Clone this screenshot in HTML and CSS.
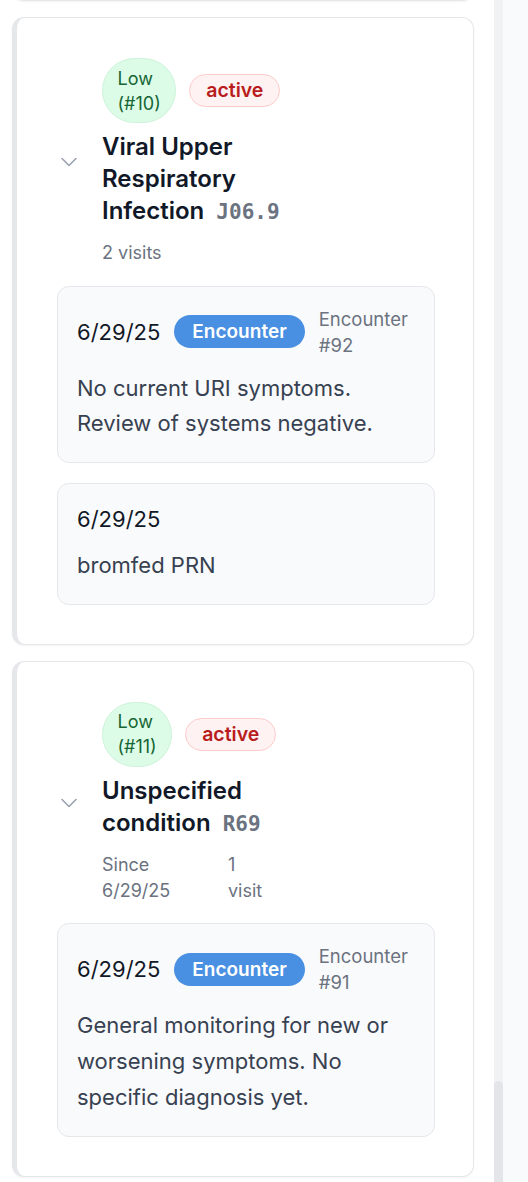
FILE: index.html
```html
<!DOCTYPE html>
<html lang="en">
<head>
<meta charset="utf-8">
<title>Problems</title>
<link rel="stylesheet" href="styles.css">
</head>
<body>
<div class="page">
  <div class="main">
    <div class="card card-stub"></div>

    <div class="card">
      <div class="card-head">
        <span class="chev"><svg viewBox="0 0 24 24" width="28" height="28"><path d="M6 9l6 6 6-6"/></svg></span>
        <div class="head-body">
          <div class="badges">
            <span class="prio">Low (#10)</span>
            <span class="status">active</span>
          </div>
          <h3 class="title">Viral Upper Respiratory Infection <code class="code">J06.9</code></h3>
          <div class="meta"><span class="meta-item">2 visits</span></div>
        </div>
      </div>
      <div class="entries">
        <div class="entry">
          <div class="entry-head">
            <span class="date">6/29/25</span>
            <span class="pill">Encounter</span>
            <span class="ref">Encounter #92</span>
          </div>
          <p class="note">No current URI symptoms. Review of systems negative.</p>
        </div>
        <div class="entry">
          <div class="entry-head">
            <span class="date">6/29/25</span>
          </div>
          <p class="note">bromfed PRN</p>
        </div>
      </div>
    </div>

    <div class="card">
      <div class="card-head">
        <span class="chev"><svg viewBox="0 0 24 24" width="28" height="28"><path d="M6 9l6 6 6-6"/></svg></span>
        <div class="head-body">
          <div class="badges">
            <span class="prio">Low (#11)</span>
            <span class="status">active</span>
          </div>
          <h3 class="title">Unspecified condition <code class="code">R69</code></h3>
          <div class="meta">
            <span class="meta-item since">Since 6/29/25</span>
            <span class="meta-item count">1 visit</span>
          </div>
        </div>
      </div>
      <div class="entries">
        <div class="entry">
          <div class="entry-head">
            <span class="date">6/29/25</span>
            <span class="pill">Encounter</span>
            <span class="ref">Encounter #91</span>
          </div>
          <p class="note">General monitoring for new or worsening symptoms. No specific diagnosis yet.</p>
        </div>
      </div>
    </div>
  </div>
  <div class="scroll-track"><div class="scroll-thumb"></div></div>
  <div class="gutter"></div>
</div>
</body>
</html>
```

FILE: styles.css
```css
* { box-sizing: border-box; }
html, body { margin: 0; padding: 0; }
body {
  font-family: Inter, "Noto Sans", "Liberation Sans", sans-serif;
  background: #ffffff;
  color: #111827;
  height: 1182px;
  overflow: hidden;
}
.page {
  display: flex;
  height: 1182px;
  overflow: hidden;
}
.main {
  width: 494px;
  flex: none;
  background: #ffffff;
  padding: 0 20px 0 12px;
  display: flex;
  flex-direction: column;
  gap: 16px;
}
.scroll-track {
  width: 9px;
  flex: none;
  background: #f1f2f4;
  display: flex;
  flex-direction: column;
}
.scroll-thumb {
  margin-top: auto;
  height: 101px;
  background: #e4e5e9;
  border-radius: 5px 5px 0 0;
}
.gutter {
  flex: 1;
  background: #f9fafb;
}

.card {
  flex: none;
  background: #ffffff;
  border: 1px solid #e5e7eb;
  border-left: 5px solid #e5e7eb;
  border-radius: 12px;
  box-shadow: 0 1px 2px rgba(0, 0, 0, 0.05);
  padding-bottom: 39px;
}
.card-stub {
  height: 30px;
  margin-top: -29px;
  padding: 0;
}

.card-head {
  display: flex;
  align-items: center;
  gap: 19px;
  padding: 40px 20px 0 38px;
}
.chev {
  flex: none;
  width: 28px;
  height: 28px;
  display: flex;
}
.chev svg {
  fill: none;
  stroke: #9ca3af;
  stroke-width: 1.4;
  stroke-linecap: round;
  stroke-linejoin: round;
}
.head-body {
  width: 182px;
  flex: none;
}
.badges {
  display: flex;
  align-items: center;
  gap: 13px;
}
.prio {
  width: min-content;
  background: #dcfce7;
  color: #166534;
  border: 1px solid #cdf3d9;
  border-radius: 9999px;
  padding: 6.5px 14.5px;
  font-size: 18px;
  line-height: 25px;
  font-weight: 400;
}
.status {
  background: #fef2f2;
  color: #b91c1c;
  border: 1px solid #fecaca;
  border-radius: 9999px;
  padding: 2.5px 16px;
  font-size: 19.5px;
  line-height: 26.5px;
  font-weight: 600;
}
.title {
  margin: 8px 0 0;
  font-size: 24px;
  line-height: 32px;
  font-weight: 600;
  color: #111827;
}
.code {
  margin-left: 6px;
  font-family: "DejaVu Sans Mono", "Liberation Mono", monospace;
  font-size: 21px;
  font-weight: 700;
  color: #6b7280;
}
.meta {
  margin-top: 12px;
  display: flex;
  gap: 16px;
  font-size: 18px;
  line-height: 25.7px;
  color: #6b7280;
}
.meta-item.since { width: 110px; flex: none; }
.meta-item.count { width: 44px; flex: none; }

.entries {
  margin-top: 20px;
  padding: 0 38px 0 40px;
  display: flex;
  flex-direction: column;
  gap: 20px;
}
.entry {
  background: #f9fafb;
  border: 1px solid #e5e7eb;
  border-radius: 12px;
  padding: 19px 19px 20px;
}
.entry-head {
  display: flex;
  align-items: center;
  gap: 14px;
}
.date {
  flex: none;
  font-size: 22px;
  line-height: 32px;
  color: #111827;
}
.pill {
  flex: none;
  background: #4a90e2;
  color: #ffffff;
  border-radius: 9999px;
  padding: 0 18px;
  font-size: 19px;
  line-height: 33px;
  font-weight: 600;
}
.ref {
  font-size: 18.5px;
  line-height: 26px;
  color: #6b7280;
}
.note {
  margin: 13px 0 0;
  font-size: 22px;
  line-height: 35.75px;
  color: #374151;
}
```
